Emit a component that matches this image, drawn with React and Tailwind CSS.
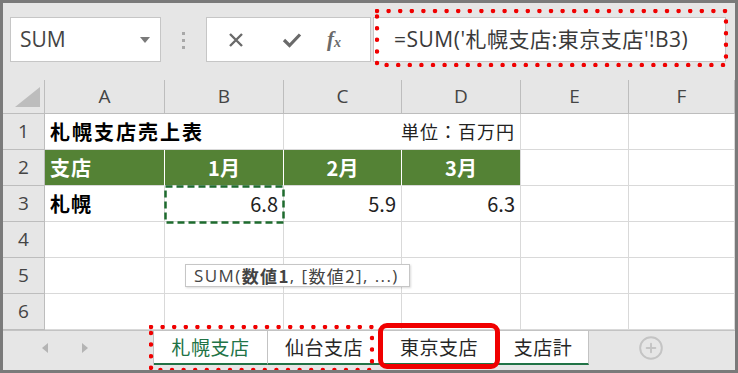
// App.jsx — Excel sheet-group formula screenshot
import { CirclePlus } from "lucide-react";

const JP = { fontFamily: '"Noto Sans CJK JP", "Noto Sans", sans-serif' };
const UI = { fontFamily: '"Open Sans", "Noto Sans", "Noto Sans CJK JP", sans-serif' };

const COLS = [
  { key: "A", w: "w-[120px]" },
  { key: "B", w: "w-[119px]" },
  { key: "C", w: "w-[118px]" },
  { key: "D", w: "w-[119px]" },
  { key: "E", w: "w-[108px]" },
  { key: "F", w: "flex-1" },
];

function RowHead({ n }) {
  return (
    <div className="w-[42px] shrink-0 h-full bg-[#e6e6e6] border-r border-b border-[#bdbdbd] flex items-center justify-center text-[19px] text-[#444]" style={UI}>
      {n}
    </div>
  );
}

function Cell({ w, className = "", children }) {
  return (
    <div className={`${w} shrink-0 h-full border-r border-b border-[#d9d9d9] flex items-center whitespace-nowrap ${className}`}>
      {children}
    </div>
  );
}

function DottedBox({ w, h, className }) {
  return (
    <svg width={w} height={h} className={`absolute pointer-events-none ${className}`}>
      <rect x="2" y="2" width={w - 4} height={h - 4} fill="none" stroke="#f00000" strokeWidth="4.5" strokeDasharray="0 11.6" strokeLinecap="round" />
    </svg>
  );
}

function Tab({ w, active, children }) {
  return (
    <div className={`${w} h-[34px] bg-white border-r border-[#c3c3c3] border-b-2 border-b-[#217346] flex items-center justify-center text-[19px] tracking-[0.5px] ${active ? "text-[#217346]" : "text-[#262626]"}`} style={JP}>
      {children}
    </div>
  );
}

export default function App() {
  return (
    <div className="relative w-[738px] h-[373px] border-[3px] border-[#7a7a7a] bg-[#e6e6e6] flex flex-col overflow-hidden select-none">

      {/* ── Formula bar ── */}
      <div className="h-[77px] shrink-0 flex items-start pt-[14px] pl-[7px]">
        <div className="w-[151px] h-[45px] bg-white border border-[#c6c6c6] flex items-center justify-between pl-[9px] pr-[10px]">
          <span className="text-[21px] text-[#444]" style={UI}>SUM</span>
          <svg width="10" height="6"><polygon points="0,0 10,0 5,6" fill="#7a7a7a" /></svg>
        </div>
        <div className="ml-[21px] mt-[15px] flex flex-col gap-[4px]">
          <span className="w-[3px] h-[3px] bg-[#a8a8a8]" />
          <span className="w-[3px] h-[3px] bg-[#a8a8a8]" />
          <span className="w-[3px] h-[3px] bg-[#a8a8a8]" />
        </div>
        <div className="ml-[21px] w-[165px] h-[45px] bg-white border border-[#c6c6c6] flex items-center">
          <svg width="16" height="16" className="ml-[21px]">
            <path d="M2 2 L14 14 M14 2 L2 14" stroke="#6a6a6a" strokeWidth="2.4" />
          </svg>
          <svg width="20" height="16" className="ml-[38px]">
            <path d="M2 8 L7.5 13.5 L18 2.5" fill="none" stroke="#6a6a6a" strokeWidth="3.2" />
          </svg>
          <span className="ml-[25px] italic text-[21px] text-[#6a6a6a] font-bold" style={{ fontFamily: '"Liberation Serif", serif' }}>
            f<span className="text-[14px] align-[-1px]">x</span>
          </span>
        </div>
        <div className="ml-[2px] w-[353px] h-[45px] bg-white border border-[#c6c6c6] flex items-center pl-[20px]">
          <span className="text-[21px] tracking-[0.5px] text-[#3a3a3a] whitespace-nowrap" style={UI}>
            =SUM('<span style={JP}>札幌支店:東京支店</span>'!B3)
          </span>
        </div>
      </div>

      {/* ── Column headers ── */}
      <div className="h-[34px] shrink-0 flex bg-[#e6e6e6]">
        <div className="w-[42px] shrink-0 h-full border-r border-b border-[#bdbdbd] flex items-end justify-end pr-[4px] pb-[6px]">
          <svg width="25" height="20"><polygon points="25,0 25,20 0,20" fill="#bdbdbd" /></svg>
        </div>
        {COLS.map((c) => (
          <div key={c.key} className={`${c.w} shrink-0 h-full border-r border-b border-[#bdbdbd] flex items-center justify-center text-[19px] text-[#444]`} style={UI}>
            {c.key}
          </div>
        ))}
      </div>

      {/* ── Rows ── */}
      <div className="flex flex-col bg-white" style={JP}>
        <div className="h-[36px] flex">
          <RowHead n="1" />
          <Cell w="w-[239px]" className="pl-[5px] text-[20px] font-bold tracking-[2px] text-black">札幌支店売上表</Cell>
          <Cell w="w-[237px]" className="justify-end pr-[5px] text-[18px] tracking-[1px] text-[#222]">単位：百万円</Cell>
          <Cell w="w-[108px]" />
          <Cell w="flex-1" />
        </div>
        <div className="h-[36px] flex">
          <RowHead n="2" />
          <Cell w="w-[120px]" className="bg-[#548235] border-r-white pl-[5px] text-[20px] font-bold text-white tracking-[1px]">支店</Cell>
          <Cell w="w-[119px]" className="bg-[#548235] border-r-white justify-center text-[20px] font-bold text-white">1月</Cell>
          <Cell w="w-[118px]" className="bg-[#548235] border-r-white justify-center text-[20px] font-bold text-white">2月</Cell>
          <Cell w="w-[119px]" className="bg-[#548235] justify-center text-[20px] font-bold text-white">3月</Cell>
          <Cell w="w-[108px]" />
          <Cell w="flex-1" />
        </div>
        <div className="h-[36px] flex">
          <RowHead n="3" />
          <Cell w="w-[120px]" className="pl-[5px] text-[20px] font-bold tracking-[1px]">札幌</Cell>
          <Cell w="w-[119px]" className="justify-end pr-[5px] text-[20px] text-[#222]">6.8</Cell>
          <Cell w="w-[118px]" className="justify-end pr-[5px] text-[20px] text-[#222]">5.9</Cell>
          <Cell w="w-[119px]" className="justify-end pr-[5px] text-[20px] text-[#222]">6.3</Cell>
          <Cell w="w-[108px]" />
          <Cell w="flex-1" />
        </div>
        {["4", "5", "6"].map((n) => (
          <div key={n} className="h-[36px] flex">
            <RowHead n={n} />
            {COLS.map((c) => <Cell key={c.key} w={c.w} />)}
          </div>
        ))}
      </div>

      {/* ── Sheet tabs ── */}
      <div className="flex-1 flex items-start border-t border-[#c3c3c3] bg-[#e6e6e6]">
        <div className="w-[150px] h-[34px] flex items-center pl-[39px] gap-[34px]">
          <svg width="6" height="10"><polygon points="6,0 6,10 0,5" fill="#b4b4b4" /></svg>
          <svg width="6" height="10"><polygon points="0,0 0,10 6,5" fill="#b4b4b4" /></svg>
        </div>
        <div className="flex border-l border-[#c3c3c3]">
          <Tab w="w-[114px]" active>札幌支店</Tab>
          <Tab w="w-[113px]">仙台支店</Tab>
          <Tab w="w-[117px]">東京支店</Tab>
          <Tab w="w-[91px]">支店計</Tab>
        </div>
        <div className="ml-[49px] h-[34px] flex items-center">
          <CirclePlus size={26} strokeWidth={1.8} color="#c4c4c4" />
        </div>
      </div>

      {/* ── Overlays ── */}
      <svg width="121" height="39" className="absolute left-[161px] top-[182px] pointer-events-none">
        <rect x="1.5" y="1.5" width="118" height="36" fill="none" stroke="#1e6b2e" strokeWidth="2.5" strokeDasharray="7 4" />
      </svg>

      <div className="absolute left-[182px] top-[261px] w-[225px] h-[23px] bg-white border border-[#c6c6c6] shadow-[1px_1px_2px_rgba(0,0,0,0.15)] flex items-center pl-[8px] text-[17px] tracking-[1.4px] text-[#444] whitespace-nowrap" style={UI}>
        SUM(<span className="font-bold" style={JP}>数値1</span>, [<span style={JP}>数値2</span>], ...)
      </div>

      <DottedBox w={353} h={58} className="left-[372px] top-[6px]" />
      <DottedBox w={225} h={47} className="left-[146px] top-[322px]" />
      <div className="absolute left-[375px] top-[320px] w-[122px] h-[46px] border-[5px] border-[#f00000] rounded-[9px] pointer-events-none" />
    </div>
  );
}
